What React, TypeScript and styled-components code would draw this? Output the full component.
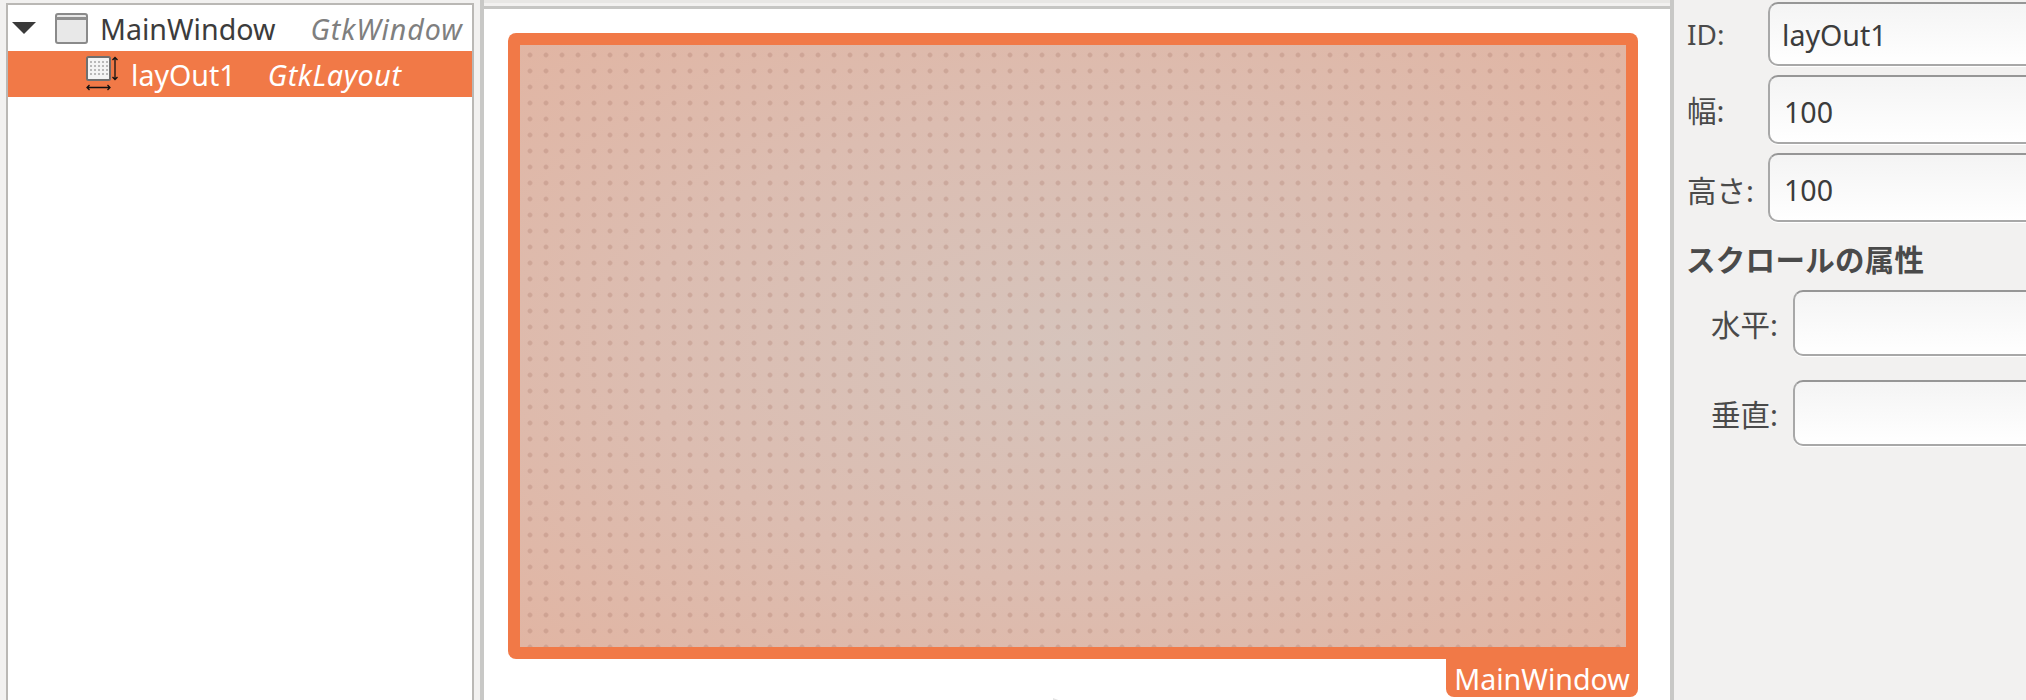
import styled, { createGlobalStyle } from "styled-components"

const GlobalStyle = createGlobalStyle`
*{
    margin: 0;
    padding: 0;
    box-sizing: border-box;
}
body{
    font-family: "Noto Sans", "Noto Sans CJK JP", sans-serif;
    background-color: #f2f1f0;
}
`

const Page = styled.div`
width: 2026px;
height: 700px;
display: flex;
overflow: hidden;
background-color: #f2f1f0;
color: #3c3c3c;
font-size: 28.6px;
`

const TreeColumn = styled.div`
width: 480px;
padding: 3px 6px 0 6px;
flex-shrink: 0;
`

const Tree = styled.div`
min-height: 720px;
background-color: #fff;
border: 2px solid #bab8b5;
`

const TreeRow = styled.div<{ $selected?: boolean; $indent: number }>`
height: 46px;
display: flex;
align-items: center;
padding-left: ${p => p.$indent}px;
background-color: ${p => (p.$selected ? "#f17947" : "transparent")};
color: ${p => (p.$selected ? "#fff" : "#3c3c3c")};
white-space: nowrap;
`

const RowName = styled.span`
margin-left: 12px;
`

const RowType = styled.span<{ $selected?: boolean; $offset: number; $spacing: number }>`
margin-left: ${p => p.$offset}px;
font-style: italic;
letter-spacing: ${p => p.$spacing}px;
color: ${p => (p.$selected ? "#fff" : "#7f7f7f")};
`

const Expander = styled.svg`
margin-right: 19px;
`

const Divider = styled.div`
width: 4px;
flex-shrink: 0;
background-color: #c8c8c6;
`

const Canvas = styled.div`
width: 1186px;
flex-shrink: 0;
display: flex;
flex-direction: column;
`

const TopRule = styled.div`
height: 9px;
flex-shrink: 0;
background: linear-gradient(#e8e7e5 0 3px, #f2f1f0 3px 6px, #c6c6c4 6px 9px);
`

const CanvasBody = styled.div`
flex: 1;
background-color: #fff;
padding: 24px 32px 0 24px;
display: flex;
flex-direction: column;
align-items: stretch;
`

const Frame = styled.div`
height: 626px;
padding: 12px;
background-color: #f17947;
border-radius: 8px 8px 0 8px;
`

const DotGrid = styled.div`
height: 100%;
background-color: #dcb5a5;
background-image:
    radial-gradient(circle, rgba(168, 118, 104, 0.3) 1.8px, rgba(168, 118, 104, 0) 3px),
    radial-gradient(ellipse at center, #d6c4bc 0%, #dcbdb1 55%, #e1b5a3 100%);
background-size: 16px 16px, 100% 100%;
background-position: 2px 2px, 0 0;
`

const FrameTag = styled.div`
align-self: flex-end;
width: 192px;
height: 38px;
display: flex;
align-items: center;
justify-content: center;
background-color: #f17947;
color: #fff;
border-radius: 0 0 8px 8px;
`

const Pointer = styled.svg`
display: block;
margin: 1px 0 0 545px;
`

const Props = styled.div`
flex: 1;
padding: 2px 0 0 13px;
`

const FieldGrid = styled.div`
display: grid;
grid-template-columns: 81px 1fr;
row-gap: 9px;
align-items: center;
`

const FieldLabel = styled.label<{ $cjk?: boolean; $drop?: number }>`
color: #4a4a4a;
white-space: nowrap;
font-size: ${p => (p.$cjk ? 29.5 : 28)}px;
padding-top: ${p => p.$drop ?? 0}px;
`

const Field = styled.div<{ $height?: number; $pad?: number; $drop?: number }>`
height: ${p => p.$height ?? 66}px;
margin-right: -20px;
padding-left: ${p => p.$pad ?? 12}px;
padding-top: ${p => p.$drop ?? 0}px;
display: flex;
align-items: center;
border: 2px solid #a8a8a8;
border-top-color: #969696;
border-radius: 10px;
background: linear-gradient(#f4f4f4, #ffffff);
box-shadow: 0 1px 0 #fff;
color: #3c3c3c;
`

const Heading = styled.h3`
margin: 19px 0 11px -1px;
font-size: 29.5px;
line-height: 38px;
font-weight: 700;
color: #4a4a4a;
letter-spacing: 0.3px;
white-space: nowrap;
`

const ScrollGrid = styled.div`
display: grid;
grid-template-columns: 106px 1fr;
row-gap: 24px;
align-items: center;
`

const ScrollLabel = styled(FieldLabel)`
text-align: right;
padding-right: 15px;
`

const WindowIcon = () => (
  <svg width="33" height="31" viewBox="0 0 33 31">
    <rect x="1" y="1" width="31" height="29" rx="2" fill="#e8e8e8" stroke="#8a8a8a" strokeWidth="2" />
    <rect x="1.5" y="4" width="30" height="3" fill="#8f8f8f" />
  </svg>
)

const LayoutIcon = () => (
  <svg width="33" height="36" viewBox="0 0 33 36">
    <rect x="1" y="1" width="23" height="23" rx="1.5" fill="#f4f4f4" stroke="#6f6f6f" strokeWidth="2" />
    <g fill="#8c8c8c">
      {[6, 10, 14, 18].flatMap(y =>
        [5, 9, 13, 17, 21].map(x => <rect key={`${x}-${y}`} x={x - 0.75} y={y - 0.75} width="1.5" height="1.5" />)
      )}
    </g>
    <path d="M29 1.5V23.5M26.5 4L29 1.5L31.5 4M26.5 21L29 23.5L31.5 21" fill="none" stroke="#111" strokeWidth="1.3" />
    <path d="M1 31.5H24M3.5 29L1 31.5L3.5 34M21.5 29L24 31.5L21.5 34" fill="none" stroke="#111" strokeWidth="1.3" />
  </svg>
)

const App = () => {
  return (
    <>
      <GlobalStyle />
      <Page>
        <TreeColumn>
          <Tree>
            <TreeRow $indent={4}>
              <Expander width="24" height="12" viewBox="0 0 24 12">
                <path d="M0 0H24L12 12Z" fill="#3a3a3a" />
              </Expander>
              <WindowIcon />
              <RowName>MainWindow</RowName>
              <RowType $offset={35} $spacing={0.9}>GtkWindow</RowType>
            </TreeRow>
            <TreeRow $selected $indent={78}>
              <LayoutIcon />
              <RowName>layOut1</RowName>
              <RowType $selected $offset={32} $spacing={0.6}>GtkLayout</RowType>
            </TreeRow>
          </Tree>
        </TreeColumn>
        <Divider />
        <Canvas>
          <TopRule />
          <CanvasBody>
            <Frame>
              <DotGrid />
            </Frame>
            <FrameTag>MainWindow</FrameTag>
            <Pointer width="8" height="3" viewBox="0 0 8 3">
              <path d="M0 0L8 3H0Z" fill="#e4e4e4" />
            </Pointer>
          </CanvasBody>
        </Canvas>
        <Divider />
        <Props>
          <FieldGrid>
            <FieldLabel>ID:</FieldLabel>
            <Field $height={64}>layOut1</Field>
            <FieldLabel $cjk>幅:</FieldLabel>
            <Field $height={69} $pad={14} $drop={3}>100</Field>
            <FieldLabel $cjk $drop={3}>高さ:</FieldLabel>
            <Field $height={69} $pad={14} $drop={3}>100</Field>
          </FieldGrid>
          <Heading>スクロールの属性</Heading>
          <ScrollGrid>
            <ScrollLabel $cjk>水平:</ScrollLabel>
            <Field />
            <ScrollLabel $cjk>垂直:</ScrollLabel>
            <Field />
          </ScrollGrid>
        </Props>
      </Page>
    </>
  )
}

export default App
